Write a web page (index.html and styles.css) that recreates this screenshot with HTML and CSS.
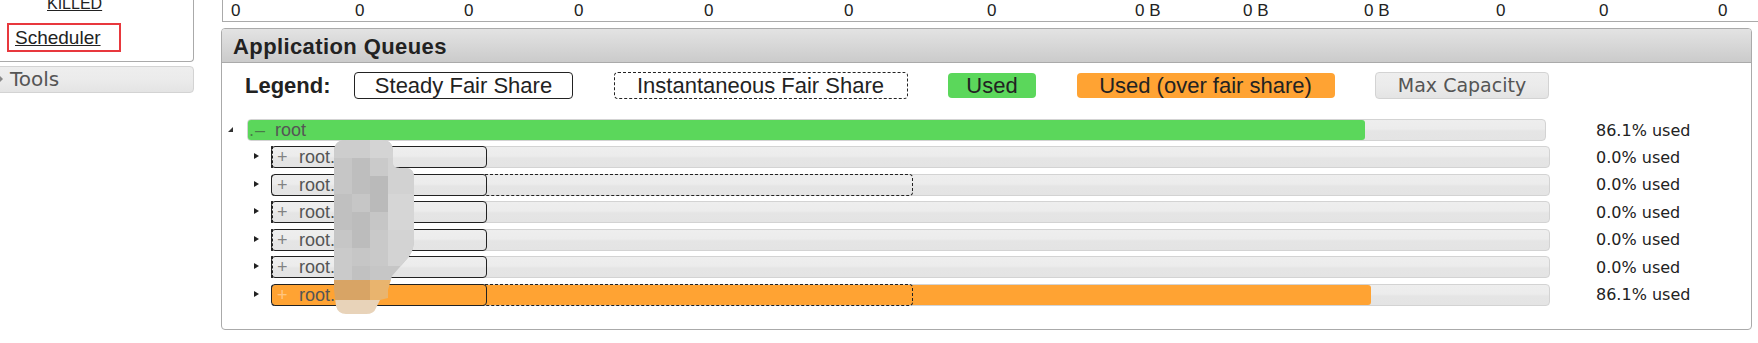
FILE: index.html
```html
<!DOCTYPE html>
<html lang="en">
<head>
    <meta charset="UTF-8">
    <title>Fair Scheduler</title>
    <link rel="stylesheet" href="styles.css">
</head>
<body>
    <div class="layout">
        <nav class="nav">
            <div class="nav-box">
                <ul class="states">
                    <li><a href="#">KILLED</a></li>
                </ul>
                <div class="marked"><a href="#">Scheduler</a></div>
            </div>
            <div class="nav-section"><span class="caret"></span>Tools</div>
        </nav>

        <main class="content">
            <div class="metrics">
                <span>0</span><span>0</span><span>0</span><span>0</span><span>0</span><span>0</span><span>0</span>
                <span>0 B</span><span>0 B</span><span>0 B</span><span>0</span><span>0</span><span>0</span>
            </div>

            <section class="queues">
                <h3 class="queues-title">Application Queues</h3>

                <div class="legend">
                    <span class="legend-label">Legend:</span>
                    <div class="legend-items">
                        <span class="key key-steady">Steady Fair Share</span>
                        <span class="key key-inst">Instantaneous Fair Share</span>
                        <span class="key key-used">Used</span>
                        <span class="key key-over">Used (over fair share)</span>
                        <span class="key key-max">Max Capacity</span>
                    </div>
                </div>

                <ul class="tree">
                    <li>
                        <div class="queue">
                            <div class="queue-main">
                                <span class="twisty open"></span>
                                <div class="bar">
                                    <span class="bar-fill fill-used" style="width:86.1%"></span>
                                    <span class="q-label"><span class="q-icon root-icon">.–</span>root</span>
                                </div>
                            </div>
                            <span class="pct">86.1% used</span>
                        </div>
                        <ul class="children">
                            <li class="queue">
                                <div class="queue-main">
                                    <span class="twisty"></span>
                                    <div class="bar">
                                        <span class="share-inst" style="width:0"></span>
                                        <span class="share-steady" style="width:16.9%"></span>
                                        <span class="q-label"><span class="q-icon">+</span>root.</span>
                                    </div>
                                </div>
                                <span class="pct">0.0% used</span>
                            </li>
                            <li class="queue">
                                <div class="queue-main">
                                    <span class="twisty"></span>
                                    <div class="bar">
                                        <span class="share-inst" style="width:50.3%"></span>
                                        <span class="share-steady" style="width:16.9%"></span>
                                        <span class="q-label"><span class="q-icon">+</span>root.</span>
                                    </div>
                                </div>
                                <span class="pct">0.0% used</span>
                            </li>
                            <li class="queue">
                                <div class="queue-main">
                                    <span class="twisty"></span>
                                    <div class="bar">
                                        <span class="share-inst" style="width:0"></span>
                                        <span class="share-steady" style="width:16.9%"></span>
                                        <span class="q-label"><span class="q-icon">+</span>root.</span>
                                    </div>
                                </div>
                                <span class="pct">0.0% used</span>
                            </li>
                            <li class="queue">
                                <div class="queue-main">
                                    <span class="twisty"></span>
                                    <div class="bar">
                                        <span class="share-inst" style="width:0"></span>
                                        <span class="share-steady" style="width:16.9%"></span>
                                        <span class="q-label"><span class="q-icon">+</span>root.</span>
                                    </div>
                                </div>
                                <span class="pct">0.0% used</span>
                            </li>
                            <li class="queue">
                                <div class="queue-main">
                                    <span class="twisty"></span>
                                    <div class="bar">
                                        <span class="share-inst" style="width:0"></span>
                                        <span class="share-steady" style="width:16.9%"></span>
                                        <span class="q-label"><span class="q-icon">+</span>root.</span>
                                    </div>
                                </div>
                                <span class="pct">0.0% used</span>
                            </li>
                            <li class="queue">
                                <div class="queue-main">
                                    <span class="twisty"></span>
                                    <div class="bar">
                                        <span class="bar-fill fill-over" style="width:86.1%"></span>
                                        <span class="share-inst" style="width:50.3%"></span>
                                        <span class="share-steady" style="width:16.9%"></span>
                                        <span class="q-label"><span class="q-icon q-icon-light">+</span>root.</span>
                                    </div>
                                </div>
                                <span class="pct">86.1% used</span>
                            </li>
                        </ul>
                    </li>
                </ul>

                <!-- redacted queue names -->
                <svg class="redact" width="86" height="174" viewBox="0 0 86 174">
                    <defs>
                        <clipPath id="blob">
                            <path d="M4 12 Q4 0 16 0 L52 0 Q63 0 63 12 L63 24 Q63 28 70 28 L76 28 Q84 28 84 38 L84 100 Q84 112 76 120 L62 136 L58 150 L58 158 L50 160 L46 168 Q44 174 36 174 L16 174 Q8 174 6 166 L4 150 Z"/>
                        </clipPath>
                    </defs>
                    <g clip-path="url(#blob)">
                        <rect x="0" y="0" width="86" height="140" fill="#c6c6c6"/>
                        <rect x="0" y="0" width="40" height="18" fill="#cdcdcd"/>
                        <rect x="40" y="0" width="24" height="18" fill="#d4d4d4"/>
                        <rect x="22" y="18" width="18" height="36" fill="#bebebe"/>
                        <rect x="40" y="18" width="18" height="18" fill="#cacaca"/>
                        <rect x="58" y="18" width="28" height="36" fill="#d2d2d2"/>
                        <rect x="0" y="54" width="22" height="36" fill="#c0c0c0"/>
                        <rect x="40" y="36" width="18" height="36" fill="#bababa"/>
                        <rect x="58" y="54" width="28" height="36" fill="#d6d6d6"/>
                        <rect x="22" y="72" width="18" height="36" fill="#bcbcbc"/>
                        <rect x="40" y="90" width="18" height="36" fill="#c9c9c9"/>
                        <rect x="58" y="90" width="28" height="36" fill="#d3d3d3"/>
                        <rect x="0" y="108" width="22" height="32" fill="#cacaca"/>
                        <rect x="22" y="126" width="18" height="14" fill="#c1c1c1"/>
                        <rect x="0" y="140" width="40" height="20" fill="#d8a465"/>
                        <rect x="40" y="140" width="46" height="20" fill="#e9b46e"/>
                        <rect x="0" y="160" width="86" height="14" fill="#e8d3b9"/>
                    </g>
                </svg>
            </section>
        </main>
    </div>
</body>
</html>
```

FILE: styles.css
```css
* {
    margin: 0;
    padding: 0;
    box-sizing: border-box;
}

body {
    width: 1758px;
    height: 343px;
    overflow: hidden;
    background-color: #fff;
    color: #222;
    font-family: "Liberation Sans", Arial, sans-serif;
}

a {
    color: #222;
}

ul {
    list-style: none;
}

.layout {
    display: flex;
    gap: 27px;
}

/* left navigation */
.nav {
    width: 194px;
    flex-shrink: 0;
}

.nav-box {
    display: flow-root;
    height: 62px;
    border-right: 1px solid #aaa;
    border-bottom: 1px solid #aaa;
    border-bottom-right-radius: 4px;
}

.states {
    margin-top: -5px;
    padding-left: 47px;
    font-size: 16px;
    line-height: 18px;
}

.marked {
    width: 114px;
    height: 29px;
    margin: 10px 0 0 7px;
    padding-left: 6px;
    border: 2px solid #e8383d;
    font-size: 19px;
    line-height: 25px;
}

.nav-section {
    width: calc(100% + 12px);
    height: 27px;
    margin: 4px 0 0 -12px;
    padding-left: 10px;
    border: 1px solid #d3d3d3;
    border-radius: 4px;
    background: linear-gradient(#eeeeee, #ebebeb 50%, #e4e4e4);
    color: #555;
    font-family: "DejaVu Sans", Verdana, sans-serif;
    font-size: 20px;
    line-height: 25px;
}

.caret {
    display: inline-block;
    width: 0;
    height: 0;
    margin-right: 7px;
    border-left: 4px solid #888;
    border-top: 4px solid transparent;
    border-bottom: 4px solid transparent;
    vertical-align: 3px;
}

/* main column */
.content {
    width: 1531px;
    flex-shrink: 0;
}

.metrics {
    display: grid;
    grid-template-columns: 124px 109px 110px 130px 140px 143px 148px 108px 121px 132px 103px 119px 100px;
    width: 1560px;
    height: 22px;
    margin-left: 1px;
    padding-top: 1px;
    border-left: 1px solid #aaa;
    border-bottom: 1px solid #aaa;
    font-size: 17px;
    line-height: 20px;
}

.metrics span {
    padding-left: 8px;
}

.queues {
    position: relative;
    margin-top: 6px;
    padding-bottom: 23px;
    border: 1px solid #aaa;
    border-radius: 4px;
}

.queues-title {
    height: 34px;
    padding: 2px 0 0 11px;
    border-bottom: 1px solid #aaa;
    border-radius: 3px 3px 0 0;
    background: linear-gradient(#e3e3e3, #cbcbcb);
    font-size: 22px;
    line-height: 31px;
    font-weight: bold;
    letter-spacing: 0.4px;
}

/* legend */
.legend {
    display: flex;
    align-items: center;
    margin: 9px 0 20px;
    padding-left: 23px;
    font-size: 22px;
}

.legend-label {
    width: 109px;
    font-weight: bold;
}

.legend-items {
    display: flex;
    align-items: center;
    gap: 40.5px;
}

.key {
    height: 27px;
    border: 1px solid transparent;
    border-radius: 4px;
    line-height: 25px;
    text-align: center;
}

.key-steady {
    width: 219px;
    border-color: #222;
}

.key-inst {
    width: 294px;
    border: 1px dashed #222;
}

.key-used {
    width: 88px;
    height: 25px;
    line-height: 23px;
    background-color: #5bd75b;
}

.key-over {
    width: 258px;
    height: 25px;
    line-height: 23px;
    background-color: #ffa333;
}

.key-max {
    width: 174px;
    border-color: #d3d3d3;
    background: linear-gradient(#eeeeee, #ebebeb 50%, #e4e4e4);
    color: #555;
    font-family: "DejaVu Sans", Verdana, sans-serif;
    font-size: 19px;
}

/* queue tree */
.tree {
    padding-left: 6px;
}

.children {
    margin-top: 5px;
}

.children li + li {
    margin-top: 5.5px;
}

.queue {
    display: flex;
    align-items: center;
    height: 22px;
}

.queue-main {
    display: flex;
    width: 1368px;
    flex-shrink: 0;
}

.children .queue-main {
    padding-left: 26px;
}

.twisty {
    width: 17px;
    flex-shrink: 0;
}

.twisty::before {
    content: "";
    display: block;
    width: 0;
    height: 0;
    margin-top: 7px;
    border-left: 5px solid #222;
    border-top: 3.5px solid transparent;
    border-bottom: 3.5px solid transparent;
}

.twisty.open {
    width: 19px;
}

.twisty.open::before {
    margin-top: 8px;
    border-left: 5px solid transparent;
    border-top: 0;
    border-bottom: 5px solid #333;
}

.bar {
    position: relative;
    width: 1279px;
    height: 22px;
    border: 1px solid #d3d3d3;
    border-radius: 4px;
    background: linear-gradient(#eeeeee, #ececec 45%, #e5e5e5 55%, #e4e4e4);
}

.tree > li > .queue .bar {
    width: 1299px;
}

.bar-fill {
    position: absolute;
    top: 0;
    bottom: 0;
    left: 0;
    border-radius: 3px;
}

.fill-used {
    background-color: #5bd75b;
}

.fill-over {
    background-color: #ffa333;
}

.share-steady,
.share-inst {
    position: absolute;
    top: -1px;
    bottom: -1px;
    left: -1px;
    border-radius: 4px;
}

.share-steady {
    border: 1px solid #222;
}

.share-inst {
    border: 1px dashed #222;
}

.q-label {
    position: relative;
    padding-left: 5px;
    color: #555;
    font-size: 18px;
    line-height: 20px;
    white-space: nowrap;
}

.q-icon {
    display: inline-block;
    width: 22px;
    color: rgba(60, 60, 60, 0.62);
}

.root-icon {
    width: 26px;
    margin-left: -4px;
    letter-spacing: 1px;
}

.q-icon-light {
    color: rgba(255, 255, 255, 0.4);
}

.pct {
    font-family: "DejaVu Sans", Verdana, sans-serif;
    font-size: 16px;
    line-height: 19px;
    color: #222;
}

.redact {
    position: absolute;
    left: 108px;
    top: 111px;
}
```
